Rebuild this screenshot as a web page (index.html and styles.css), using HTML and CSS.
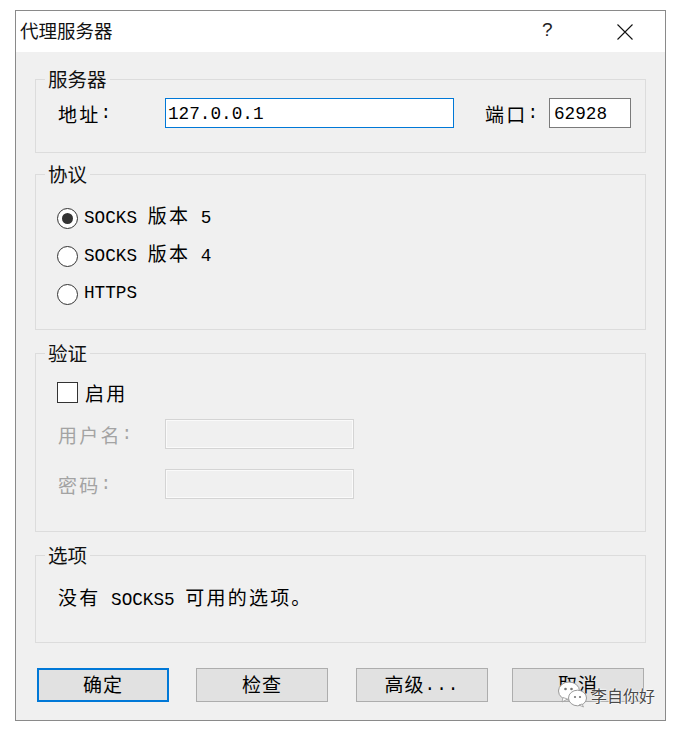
FILE: index.html
```html
<!DOCTYPE html>
<html lang="zh-CN">
<head>
<meta charset="utf-8">
<title>代理服务器</title>
<link rel="stylesheet" href="styles.css">
</head>
<body>
<div class="window">
  <div class="titlebar">
    <span class="title">代理服务器</span>
    <span class="help">?</span>
    <span class="close">
      <svg width="16" height="16" viewBox="0 0 16 16"><path d="M0.5 0.5 L15.5 15.5 M15.5 0.5 L0.5 15.5" stroke="#111" stroke-width="1.1" fill="none"/></svg>
    </span>
  </div>
  <div class="client">
    <fieldset class="group g-server">
      <legend>服务器</legend>
      <div class="gbody pl22">
        <div class="row">
          <span class="lbl mono w-lbl"><span class="cj">地址</span>:</span>
          <div class="input focus mono">127.0.0.1</div>
          <span class="lbl mono w-port"><span class="cj">端口</span>:</span>
          <div class="input port mono">62928</div>
        </div>
      </div>
    </fieldset>

    <fieldset class="group g-proto">
      <legend>协议</legend>
      <div class="gbody pl21">
        <div class="opt mono"><span class="radio on"></span><span class="otext">SOCKS <span class="cj">版本</span> 5</span></div>
        <div class="opt mono"><span class="radio"></span><span class="otext">SOCKS <span class="cj">版本</span> 4</span></div>
        <div class="opt mono"><span class="radio"></span><span class="otext">HTTPS</span></div>
      </div>
    </fieldset>

    <fieldset class="group g-auth">
      <legend>验证</legend>
      <div class="gbody pl21">
        <div class="chk-row mono"><span class="check"></span><span class="cj">启用</span></div>
        <div class="row field-row first">
          <span class="lbl mono w-lbl2 disabled"><span class="cj">用户名</span>:</span>
          <div class="input dis"></div>
        </div>
        <div class="row field-row second">
          <span class="lbl mono w-lbl2 disabled"><span class="cj">密码</span>:</span>
          <div class="input dis"></div>
        </div>
      </div>
    </fieldset>

    <fieldset class="group g-opts">
      <legend>选项</legend>
      <div class="gbody pl22">
        <div class="note mono"><span class="ntext"><span class="cj">没有</span> SOCKS5 <span class="cj">可用的选项。</span></span></div>
      </div>
    </fieldset>

    <div class="buttons">
      <button class="btn default mono"><span class="cj">确定</span></button>
      <button class="btn mono b2"><span class="cj">检查</span></button>
      <button class="btn mono b3"><span class="cj">高级</span><span class="dots">...</span></button>
      <button class="btn mono b4"><span class="cj">取消</span></button>
    </div>
  </div>

  <div class="watermark">
    <svg class="wx" width="30" height="27" viewBox="0 0 30 27">
      <ellipse cx="11" cy="10" rx="10.5" ry="9" fill="#fff" stroke="#9a9a9a" stroke-width="1"/>
      <path d="M5 16.5 L4 21 L9.5 18 Z" fill="#fff" stroke="#9a9a9a" stroke-width="0.8"/>
      <ellipse cx="19.5" cy="17" rx="9" ry="7.8" fill="#fff" stroke="#9a9a9a" stroke-width="1"/>
      <path d="M24 23 L25.5 26 L21 24 Z" fill="#fff" stroke="#9a9a9a" stroke-width="0.8"/>
      <circle cx="7.5" cy="8" r="1.3" fill="#777"/>
      <circle cx="13.5" cy="8" r="1.3" fill="#777"/>
      <circle cx="17" cy="16" r="1.1" fill="#777"/>
      <circle cx="22" cy="16" r="1.1" fill="#777"/>
    </svg>
    <span class="wm-text">李自你好</span>
  </div>
</div>
</body>
</html>
```

FILE: styles.css
```css
* { box-sizing: border-box; }

html, body {
  margin: 0;
  background: #ffffff;
}

body {
  padding: 10px 0 0 15px;
  font-family: "Noto Sans CJK SC", sans-serif;
  color: #000;
}

.window {
  position: relative;
  width: 651px;
  height: 711px;
  border: 1px solid #8a8a8a;
  background: #f0f0f0;
  display: flex;
  flex-direction: column;
}

.titlebar {
  height: 41px;
  background: #ffffff;
  display: flex;
  align-items: center;
  padding-left: 4px;
  padding-bottom: 4px;
}

.title {
  font-family: "Noto Sans CJK SC", sans-serif;
  font-size: 18.5px;
  line-height: 20px;
  color: #111;
  flex: 1;
}

.help {
  font-family: "Liberation Sans", sans-serif;
  font-size: 19px;
  line-height: 20px;
  color: #222;
  width: 20px;
  margin-right: 55px;
}

.close {
  display: flex;
  width: 16px;
  height: 16px;
  margin-right: 32px;
  margin-top: 4px;
}

.client {
  flex: 1;
  display: flex;
  flex-direction: column;
}

.mono {
  font-family: "Liberation Mono", "Noto Sans CJK SC", monospace;
  font-size: 17.7px;
}

.cj {
  font-family: "Noto Sans CJK SC", sans-serif;
  font-size: 19px;
  letter-spacing: 2.2px;
}

.group {
  margin: 0 19px;
  border: 1px solid #dcdcdc;
  min-inline-size: 0;
  padding-left: 0;
  padding-right: 0;
}

.group legend {
  font-family: "Noto Sans CJK SC", sans-serif;
  font-size: 19.5px;
  line-height: 20px;
  padding: 0 3px;
  margin-left: 9px;
  color: #111;
}

.pl21 { padding-left: 21px; }
.pl22 { padding-left: 22px; }

.g-server { margin-top: 17px; padding-top: 9px;  padding-bottom: 24px; }
.g-proto  { margin-top: 11px; padding-top: 15px; padding-bottom: 16px; }
.g-auth   { margin-top: 13px; padding-top: 14px; padding-bottom: 32px; }
.g-opts   { margin-top: 13px; padding-top: 20px; padding-bottom: 27px; }

.row {
  display: flex;
  align-items: center;
  height: 30px;
}

.lbl {
  display: flex;
  align-items: center;
  height: 30px;
  white-space: nowrap;
}

.w-lbl { width: 107px; }
.w-lbl2 { width: 108px; padding-left: 1px; }
.w-port { width: 64px; margin-left: 31px; }

.input {
  height: 30px;
  background: #fff;
  border: 1px solid #7a7a7a;
  display: flex;
  align-items: center;
  padding-left: 2px;
  padding-top: 3px;
  line-height: 1;
}

.input.focus {
  width: 289px;
  border-color: #0078d7;
}

.input.port {
  width: 82px;
  padding-left: 4px;
}

.input.dis {
  width: 189px;
  background: #f0f0f0;
  border: 1px solid #d4d4d4;
  box-shadow: inset 0 0 0 1px #fafafa;
}

.disabled { color: #a3a3a3; }

.opt {
  display: flex;
  align-items: center;
  height: 38px;
}

.otext {
  white-space: pre;
  line-height: 20px;
  padding-bottom: 3px;
}

.radio {
  width: 21px;
  height: 21px;
  border-radius: 50%;
  border: 1.5px solid #333;
  background: #fff;
  margin-right: 6px;
  display: flex;
  align-items: center;
  justify-content: center;
  flex: none;
}

.radio.on::after {
  content: "";
  width: 11px;
  height: 11px;
  border-radius: 50%;
  background: #333;
}

.chk-row {
  display: flex;
  align-items: center;
  height: 30px;
}

.check {
  width: 21px;
  height: 21px;
  border: 1.5px solid #333;
  background: #fff;
  margin-right: 7px;
  flex: none;
}

.field-row.first { margin-top: 12px; }
.field-row.second { margin-top: 20px; }

.note {
  height: 30px;
  display: flex;
  align-items: center;
}

.ntext {
  white-space: pre;
  line-height: 20px;
  padding-bottom: 3px;
}

.buttons {
  display: flex;
  margin-top: 25px;
  padding-left: 21px;
}

.btn {
  width: 132px;
  height: 34px;
  background: #e1e1e1;
  border: 1px solid #adadad;
  padding: 0 0 3px 0;
  color: #000;
  display: flex;
  align-items: center;
  justify-content: center;
  line-height: 24px;
}

.btn.default {
  border: 2px solid #0078d7;
}

.dots { letter-spacing: 1px; align-self: flex-end; line-height: 26px; }

.b2 { margin-left: 27px; }
.b3 { margin-left: 28px; }
.b4 { margin-left: 24px; }

.btn .cj { letter-spacing: 1px; }

.watermark {
  position: absolute;
  right: 10px;
  bottom: 12px;
  display: flex;
  align-items: center;
  gap: 3px;
}

.wm-text {
  font-family: "Noto Sans CJK SC", sans-serif;
  font-size: 16px;
  color: #4a4a4a;
  text-shadow: 0 0 2px #fff, 0 0 2px #fff, 0 0 1px #fff;
}
```
